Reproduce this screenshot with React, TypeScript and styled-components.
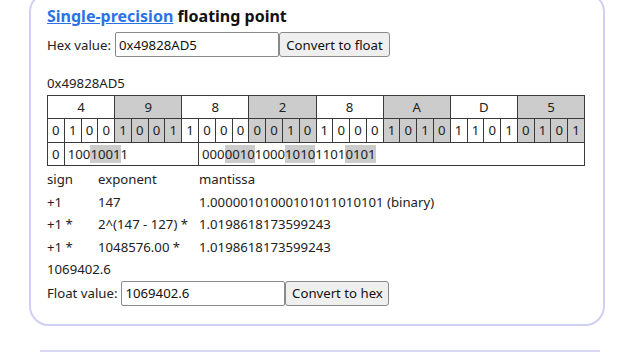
import React, { FC } from "react";
import styled, { createGlobalStyle } from "styled-components";

const GlobalStyle = createGlobalStyle`
  body {
    margin: 0;
    background: #fff;
    font-family: "Noto Sans", "Open Sans", sans-serif;
    font-size: 13.2px;
    color: #222;
  }
`;

const Page = styled.div`
  overflow: hidden;
  height: 353px;
`;

const Panel = styled.div`
  margin: -8px 0 0 29px;
  width: 540px;
  border: 2px solid #cfcff2;
  border-radius: 20px;
  padding: 10px 16px 18px;
`;

const NextPanel = styled.div`
  margin: 24px 0 0 40px;
  width: 560px;
  height: 40px;
  border-top: 2px solid #d8d8f4;
`;

const Title = styled.h2`
  margin: 0;
  font-size: 16px;
  font-weight: bold;
  line-height: 24px;
  color: #111;

  a {
    color: #2b73e4;
    text-decoration: underline;
  }
`;

const FormRow = styled.div`
  display: flex;
  align-items: center;
  margin-top: 4px;
  height: 25px;
`;

const Label = styled.span`
  margin-right: 4px;
`;

const Field = styled.input<{ $w: number }>`
  width: ${(p) => p.$w}px;
  height: 25px;
  box-sizing: border-box;
  border: 1px solid #8a8a8a;
  border-radius: 2px;
  padding: 0 3px;
  font-family: inherit;
  font-size: 13.2px;
  color: #111;
`;

const Button = styled.button<{ $w: number }>`
  width: ${(p) => p.$w}px;
  height: 25px;
  box-sizing: border-box;
  border: 1px solid #8a8a8a;
  border-radius: 3px;
  background: #efefef;
  font-family: inherit;
  font-size: 13.2px;
  color: #111;
  padding: 0;
`;

const Line = styled.div<{ $top?: number }>`
  margin-top: ${(p) => p.$top ?? 0}px;
  line-height: 22.5px;
`;

const BitTable = styled.table`
  border-collapse: collapse;
  width: 538px;
  table-layout: fixed;
  margin-top: 0;

  td {
    border: 1px solid #3a3a3a;
    height: 22.6px;
    padding: 0;
    line-height: 20px;
  }
`;

const Cell = styled.td<{ $gray?: boolean; $left?: boolean }>`
  background: ${(p) => (p.$gray ? "#cccccc" : "#fff")};
  text-align: ${(p) => (p.$left ? "left" : "center")};
  padding-left: ${(p) => (p.$left ? "3px" : "0")} !important;
  white-space: nowrap;
`;

const Hi = styled.span<{ $gray: boolean }>`
  background: ${(p) => (p.$gray ? "#cccccc" : "transparent")};
`;

const Grid = styled.div`
  display: grid;
  grid-template-columns: 51px 101px auto;
  line-height: 22.5px;
  margin-top: 2px;
`;

const hex = "49828AD5";
const bits = hex
  .split("")
  .map((h) => parseInt(h, 16).toString(2).padStart(4, "0"))
  .join("");

// split a bit range into runs by nibble, alternating shade
const runs = (from: number, to: number) => {
  const out: { text: string; gray: boolean }[] = [];
  for (let i = from; i < to; i++) {
    const gray = Math.floor(i / 4) % 2 === 1;
    const last = out[out.length - 1];
    if (last && last.gray === gray) last.text += bits[i];
    else out.push({ text: bits[i], gray });
  }
  return out;
};

const Shaded: FC<{ from: number; to: number }> = ({ from, to }) => (
  <>
    {runs(from, to).map((r, i) => (
      <Hi key={i} $gray={r.gray}>
        {r.text}
      </Hi>
    ))}
  </>
);

export default function App() {
  return (
    <Page>
      <GlobalStyle />
      <Panel>
        <Title>
          <a href="#">Single-precision</a> floating point
        </Title>
        <FormRow>
          <Label>Hex value:</Label>
          <Field $w={164} defaultValue="0x49828AD5" />
          <Button $w={111}>Convert to float</Button>
        </FormRow>
        <Line $top={15}>0x49828AD5</Line>
        <BitTable>
          <colgroup>
            {bits.split("").map((_, i) => (
              <col key={i} />
            ))}
          </colgroup>
          <tbody>
            <tr>
              {hex.split("").map((h, i) => (
                <Cell key={i} colSpan={4} $gray={i % 2 === 1}>
                  {h}
                </Cell>
              ))}
            </tr>
            <tr>
              {bits.split("").map((b, i) => (
                <Cell key={i} $gray={Math.floor(i / 4) % 2 === 1}>
                  {b}
                </Cell>
              ))}
            </tr>
            <tr>
              <Cell>{bits[0]}</Cell>
              <Cell colSpan={8} $left>
                <Shaded from={1} to={9} />
              </Cell>
              <Cell colSpan={23} $left>
                <Shaded from={9} to={32} />
              </Cell>
            </tr>
          </tbody>
        </BitTable>
        <Grid>
          <span>sign</span>
          <span>exponent</span>
          <span>mantissa</span>
          <span>+1</span>
          <span>147</span>
          <span>1.00000101000101011010101 (binary)</span>
          <span>+1 *</span>
          <span>2^(147 - 127) *</span>
          <span>1.0198618173599243</span>
          <span>+1 *</span>
          <span>1048576.00 *</span>
          <span>1.0198618173599243</span>
        </Grid>
        <Line>1069402.6</Line>
        <FormRow style={{ marginTop: 0 }}>
          <Label>Float value:</Label>
          <Field $w={164} defaultValue="1069402.6" />
          <Button $w={104}>Convert to hex</Button>
        </FormRow>
      </Panel>
      <NextPanel />
    </Page>
  );
}
